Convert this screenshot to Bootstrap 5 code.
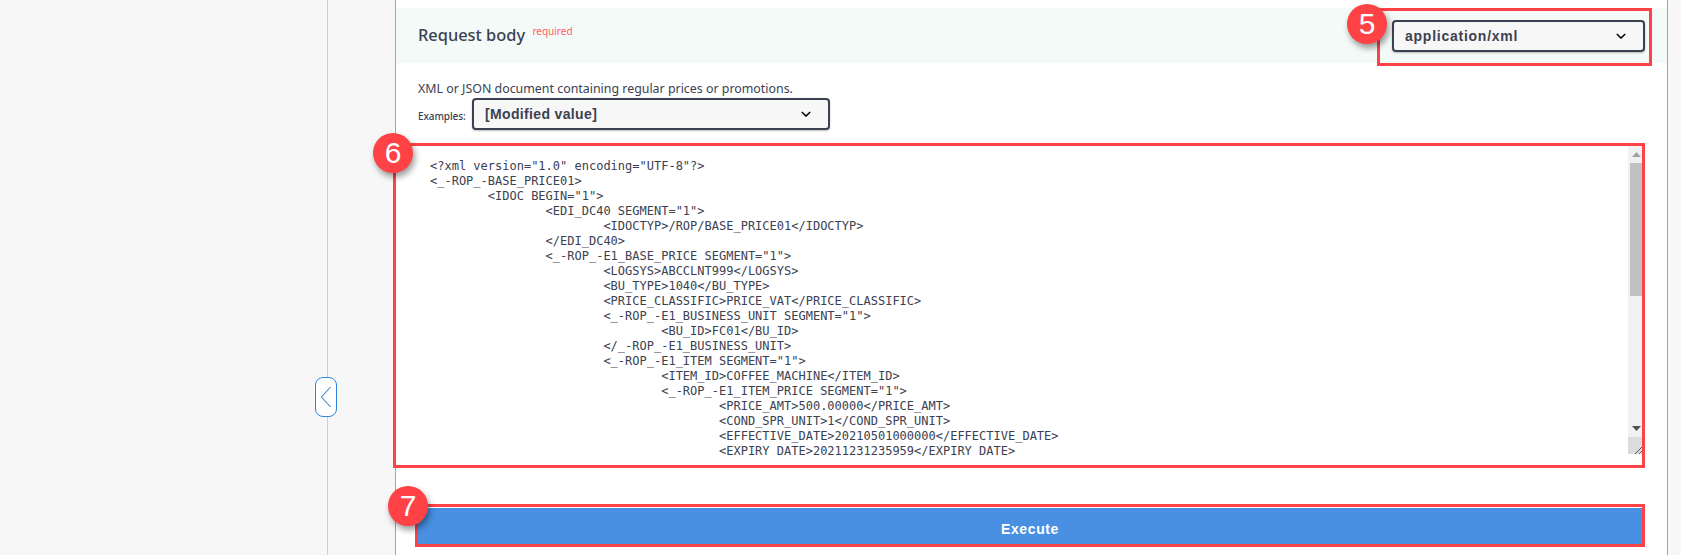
<!doctype html>
<html lang="en">
<head>
<meta charset="utf-8">
<title>Request body</title>
<link rel="stylesheet" href="https://cdn.jsdelivr.net/npm/bootstrap@5.3.0/dist/css/bootstrap.min.css">
<style>
html,body{height:100%;overflow:hidden}
body{background:#f7f7f7;color:#3b4151;font-family:"Noto Sans","Open Sans",sans-serif}
.side-pane{width:395px;flex:none;position:relative}
.side-rule{width:328px;height:100%;border-right:1px solid #cfcfcf}
.collapse-tab{position:absolute;left:315px;top:377px;width:22px;height:40px;padding:0;background:#fff;border:1px solid #2f86d6;border-radius:8px;display:flex;align-items:center;justify-content:center}
.op-pane{width:1273px;flex:none;background:#fff;border-left:1px solid #62c998;border-right:1px solid #62c998;padding-top:8px}
.body-band{height:55px;background:#f3faf7;padding-left:22px;padding-right:15px}
.band-title{font-size:16.4px;font-weight:500;line-height:20px;margin:0;padding-top:17px;color:#3b4151}
.req-flag{font-size:10px;font-weight:400;color:#ff5f63;position:relative;top:-6px;margin-left:3px}
.mark-box{border:3px solid #ff4245;position:relative}
.mark-type{width:275px;height:58px;padding:9px 4px 0 12px;flex:none}
.num-dot{position:absolute;width:40px;height:40px;border-radius:50%;background:#ff4245;color:#fff;font:400 30px/40px "Liberation Sans",Arial,sans-serif;text-align:center;box-shadow:2px 4px 6px rgba(0,0,0,.4);z-index:3}
.dot-5{left:-33px;top:-7px}
.dot-6{left:-23px;top:-13px}
.dot-7{left:-30px;top:-21px}
.swg-select{height:32px;padding:0 30px 0 11px;border:2px solid #3b4151;border-radius:4px;background-color:#f7f7f7;color:#3b4151;font:700 14px/28px "Liberation Sans",Arial,sans-serif;letter-spacing:.35px;box-shadow:0 1px 2px rgba(0,0,0,.25);background-size:20px;background-position:right 12px center;background-image:url("data:image/svg+xml,%3Csvg xmlns='http://www.w3.org/2000/svg' viewBox='0 0 20 20'%3E%3Cpath d='M13.418 7.859c.271-.268.709-.268.978 0 .27.268.272.701 0 .969l-3.908 3.83c-.27.268-.707.268-.979 0l-3.908-3.83c-.27-.267-.27-.701 0-.969.271-.268.709-.268.978 0L10 11l3.418-3.141z'/%3E%3C/svg%3E")}
.swg-select:focus{border-color:#3b4151;box-shadow:none}
.type-select{width:253px;letter-spacing:.75px}
.ex-select{width:358px}
.desc-line{font-size:12.4px;line-height:18px;margin:17px 0 0 22px;color:#3b4151}
.ex-row{margin-left:22px;height:32px}
.ex-label{font-size:10px;font-weight:500;width:54px;padding-top:5px;letter-spacing:-.1px}
.mark-area{margin:13px 22px 0 -3px;height:325px;padding-bottom:9px}
.xml-area{display:block;width:100%;height:310px;padding:13px 10px 10px 34px;border:0;border-radius:0;background:#fff;color:#3b4151;font:400 12px/15px "DejaVu Sans Mono",monospace;tab-size:8;white-space:pre;overflow:hidden;resize:none}
.xml-area:focus{box-shadow:none;background:#fff}
.fake-bar{position:absolute;right:0;top:0;width:14px;height:308px;background:#f1f1f1}
.bar-btn{height:17px;flex:none;padding-left:4px;line-height:0}
.bar-thumb{height:133px;flex:none;margin-left:2px;background:#c1c1c1}
.bar-track{flex:1 1 auto}
.bar-corner{height:17px;flex:none;background:#dcdcdc}
.mark-run{margin:36px 22px 0 19px;height:43px}
.run-btn{display:block;width:100%;height:37px;padding:7px 0 0;border:0;border-top:1px solid #fff;border-radius:0;background:#4990e2;color:#fff;font:700 14px/29px "Liberation Sans",Arial,sans-serif;letter-spacing:.6px}
.run-btn:hover{background:#4990e2;color:#fff}
.right-gutter{flex:1 1 auto}
</style>
</head>
<body>
<div class="d-flex vh-100">
  <aside class="side-pane">
    <div class="side-rule"></div>
    <button type="button" class="collapse-tab" aria-label="Collapse">
      <svg width="12" height="24" viewBox="0 0 12 24"><path d="M10.5 2 1.5 12l9 10" fill="none" stroke="#3f8bd0" stroke-width="1.1"/></svg>
    </button>
  </aside>
  <main class="op-pane">
    <div class="body-band d-flex justify-content-between align-items-start">
      <h4 class="band-title">Request body <span class="req-flag">required</span></h4>
      <div class="mark-box mark-type">
        <span class="num-dot dot-5">5</span>
        <select class="form-select swg-select type-select" aria-label="Media type">
          <option>application/xml</option>
          <option>application/json</option>
        </select>
      </div>
    </div>
    <p class="desc-line">XML or JSON document containing regular prices or promotions.</p>
    <div class="ex-row d-flex align-items-center">
      <label class="ex-label" for="exSel">Examples:</label>
      <select id="exSel" class="form-select swg-select ex-select">
        <option>[Modified value]</option>
      </select>
    </div>
    <div class="mark-box mark-area">
      <span class="num-dot dot-6">6</span>
      <textarea class="form-control xml-area" spellcheck="false" aria-label="Request body">&lt;?xml version="1.0" encoding="UTF-8"?&gt;
&lt;_-ROP_-BASE_PRICE01&gt;
	&lt;IDOC BEGIN="1"&gt;
		&lt;EDI_DC40 SEGMENT="1"&gt;
			&lt;IDOCTYP&gt;/ROP/BASE_PRICE01&lt;/IDOCTYP&gt;
		&lt;/EDI_DC40&gt;
		&lt;_-ROP_-E1_BASE_PRICE SEGMENT="1"&gt;
			&lt;LOGSYS&gt;ABCCLNT999&lt;/LOGSYS&gt;
			&lt;BU_TYPE&gt;1040&lt;/BU_TYPE&gt;
			&lt;PRICE_CLASSIFIC&gt;PRICE_VAT&lt;/PRICE_CLASSIFIC&gt;
			&lt;_-ROP_-E1_BUSINESS_UNIT SEGMENT="1"&gt;
				&lt;BU_ID&gt;FC01&lt;/BU_ID&gt;
			&lt;/_-ROP_-E1_BUSINESS_UNIT&gt;
			&lt;_-ROP_-E1_ITEM SEGMENT="1"&gt;
				&lt;ITEM_ID&gt;COFFEE_MACHINE&lt;/ITEM_ID&gt;
				&lt;_-ROP_-E1_ITEM_PRICE SEGMENT="1"&gt;
					&lt;PRICE_AMT&gt;500.00000&lt;/PRICE_AMT&gt;
					&lt;COND_SPR_UNIT&gt;1&lt;/COND_SPR_UNIT&gt;
					&lt;EFFECTIVE_DATE&gt;20210501000000&lt;/EFFECTIVE_DATE&gt;
					&lt;EXPIRY_DATE&gt;20211231235959&lt;/EXPIRY_DATE&gt;
				&lt;/_-ROP_-E1_ITEM_PRICE&gt;
			&lt;/_-ROP_-E1_ITEM&gt;
		&lt;/_-ROP_-E1_BASE_PRICE&gt;
	&lt;/IDOC&gt;
&lt;/_-ROP_-BASE_PRICE01&gt;</textarea>
      <div class="fake-bar d-flex flex-column" aria-hidden="true">
        <div class="bar-btn d-flex align-items-center"><svg width="9" height="5" viewBox="0 0 9 5"><path d="M4.5 0 9 5H0z" fill="#a3a3a3"/></svg></div>
        <div class="bar-thumb"></div>
        <div class="bar-track"></div>
        <div class="bar-btn d-flex align-items-center"><svg width="9" height="5" viewBox="0 0 9 5"><path d="M0 0h9L4.500 5z" fill="#505050"/></svg></div>
        <div class="bar-corner d-flex justify-content-end align-items-end"><svg width="7" height="7" viewBox="0 0 7 7"><path d="M0 7 7 0M4 7l3-3" fill="none" stroke="#555" stroke-width="1"/></svg></div>
      </div>
    </div>
    <div class="mark-box mark-run">
      <span class="num-dot dot-7">7</span>
      <button type="button" class="btn btn-primary run-btn">Execute</button>
    </div>
  </main>
  <div class="right-gutter"></div>
</div>
<script src="https://cdn.jsdelivr.net/npm/bootstrap@5.3.0/dist/js/bootstrap.bundle.min.js"></script>
</body>
</html>
